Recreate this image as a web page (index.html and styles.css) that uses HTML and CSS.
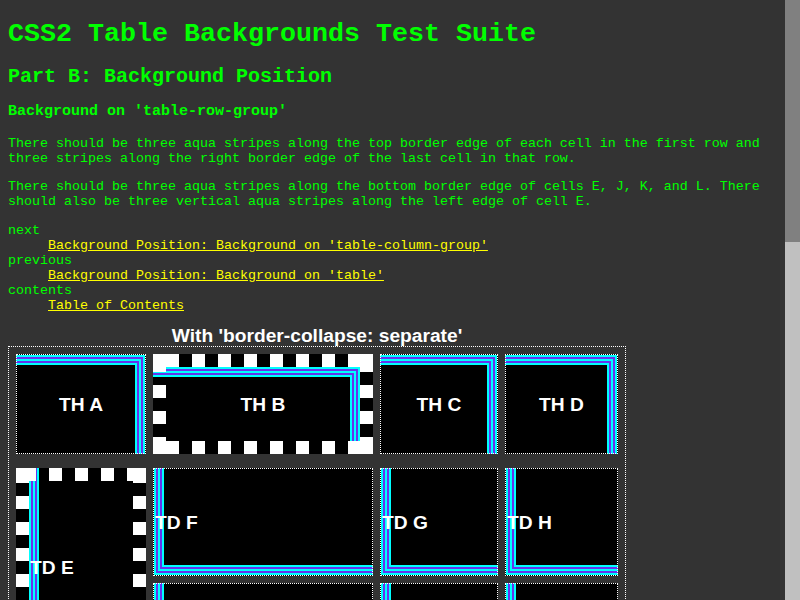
FILE: index.html
```html
<!DOCTYPE html>
<html lang="en">
<head>
<meta charset="utf-8">
<title>CSS2 Table Backgrounds Test Suite</title>
<link rel="stylesheet" href="styles.css">
</head>
<body>
<h1>CSS2 Table Backgrounds Test Suite</h1>
<h2>Part B: Background Position</h2>
<h3>Background on 'table-row-group'</h3>
<p>There should be three aqua stripes along the top border edge of each cell in the first row and three stripes along the right border edge of the last cell in that row.</p>
<p>There should be three aqua stripes along the bottom border edge of cells E, J, K, and L. There should also be three vertical aqua stripes along the left edge of cell E.</p>
<dl class="nav">
  <dt>next</dt>
  <dd><a href="#">Background Position: Background on 'table-column-group'</a></dd>
  <dt>previous</dt>
  <dd><a href="#">Background Position: Background on 'table'</a></dd>
  <dt>contents</dt>
  <dd><a href="#">Table of Contents</a></dd>
</dl>
<div class="test">
  <div class="caption">With 'border-collapse: separate'</div>
  <div class="grid">
    <div class="cell head dot top-right">TH A</div>
    <div class="cell head check-b">TH B</div>
    <div class="cell head dot top-right">TH C</div>
    <div class="cell head dot top-right">TH D</div>
    <div class="cell body check-e">TD E</div>
    <div class="cell body dot bottom-left">TD F</div>
    <div class="cell body dot bottom-left">TD G</div>
    <div class="cell body dot bottom-left">TD H</div>
    <div class="cell body dot bottom-left"></div>
    <div class="cell body dot bottom-left"></div>
    <div class="cell body dot bottom-left"></div>
  </div>
</div>
<div class="scrollbar"><div class="thumb"></div></div>
</body>
</html>
```
FILE: styles.css
```css
html {
  background: #333333;
  overflow: hidden;
}
body {
  margin: 8px 23px 8px 8px;
  font-family: "Liberation Mono", "Courier New", monospace;
  font-size: 13.333px;
  line-height: 15px;
  color: #00ff00;
}
h1 {
  font-size: 26.667px;
  line-height: 30px;
  font-weight: bold;
  margin: 11px 0 16px;
}
h2 {
  font-size: 20px;
  line-height: 23px;
  font-weight: bold;
  margin: 16px 0 15px;
}
h3 {
  font-size: 15px;
  line-height: 17px;
  font-weight: bold;
  margin: 15px 0 16px;
}
p {
  margin: 13.333px 0;
}
.nav {
  margin: 13.333px 0;
}
.nav dd {
  margin-left: 40px;
}
.nav a {
  color: #ffff00;
  text-decoration: underline;
}
.test {
  width: 618px;
}
.caption {
  font-family: "Liberation Sans", Arial, sans-serif;
  font-weight: bold;
  font-size: 19.2px;
  line-height: 20px;
  color: #ffffff;
  text-align: center;
}
.grid {
  border: 1px dotted #ffffff;
  padding: 7px;
  display: grid;
  grid-template-columns: 130px 220px 118px 113px;
  grid-template-rows: auto 108px 84px;
  gap: 7px;
}
.cell {
  --aq: #00ffff;
  --pu: #6633ee;
  box-sizing: border-box;
  display: flex;
  align-items: center;
  padding: 2px 1px 0 1px;
  font-family: "Liberation Sans", Arial, sans-serif;
  font-weight: bold;
  font-size: 19.2px;
  line-height: 22px;
  color: #ffffff;
  background-color: #000000;
  background-repeat: no-repeat;
  background-origin: border-box;
}
.head {
  height: 100px;
  margin-bottom: 7px;
  justify-content: center;
}
.body {
  justify-content: flex-start;
}
.dot {
  --b: 1px;
  border: 1px dotted #ffffff;
}
.top-right {
  background-image:
    linear-gradient(#000, #000),
    linear-gradient(var(--aq), var(--aq)),
    linear-gradient(var(--pu), var(--pu)),
    linear-gradient(var(--aq), var(--aq)),
    linear-gradient(var(--pu), var(--pu)),
    linear-gradient(var(--aq), var(--aq));
  background-size:
    calc(100% - var(--b) - 10px) calc(100% - var(--b) - 10px),
    calc(100% - var(--b) - 8px) calc(100% - var(--b) - 8px),
    calc(100% - var(--b) - 6px) calc(100% - var(--b) - 6px),
    calc(100% - var(--b) - 4px) calc(100% - var(--b) - 4px),
    calc(100% - var(--b) - 2px) calc(100% - var(--b) - 2px),
    calc(100% - var(--b)) calc(100% - var(--b));
  background-position: left bottom;
}
.bottom-left {
  background-image:
    linear-gradient(#000, #000),
    linear-gradient(var(--aq), var(--aq)),
    linear-gradient(var(--pu), var(--pu)),
    linear-gradient(var(--aq), var(--aq)),
    linear-gradient(var(--pu), var(--pu)),
    linear-gradient(var(--aq), var(--aq));
  background-size:
    calc(100% - var(--b) - 10px) calc(100% - var(--b) - 10px),
    calc(100% - var(--b) - 8px) calc(100% - var(--b) - 8px),
    calc(100% - var(--b) - 6px) calc(100% - var(--b) - 6px),
    calc(100% - var(--b) - 4px) calc(100% - var(--b) - 4px),
    calc(100% - var(--b) - 2px) calc(100% - var(--b) - 2px),
    calc(100% - var(--b)) calc(100% - var(--b));
  background-position: right top;
}
.check-b {
  --b: 13px;
  border: 13px solid transparent;
  background-image:
    linear-gradient(#fff, #fff),
    linear-gradient(#fff, #fff),
    linear-gradient(#fff, #fff),
    linear-gradient(#fff, #fff),
    repeating-linear-gradient(to right, transparent 0 13px, #fff 13px 26px),
    repeating-linear-gradient(to right, transparent 0 13px, #fff 13px 26px),
    repeating-linear-gradient(to bottom, transparent 0 5px, #fff 5px 18px, transparent 18px 26px),
    repeating-linear-gradient(to bottom, transparent 0 5px, #fff 5px 18px, transparent 18px 26px),
    linear-gradient(#000, #000),
    linear-gradient(var(--aq), var(--aq)),
    linear-gradient(var(--pu), var(--pu)),
    linear-gradient(var(--aq), var(--aq)),
    linear-gradient(var(--pu), var(--pu)),
    linear-gradient(var(--aq), var(--aq));
  background-size:
    13px 13px, 13px 13px, 13px 13px, 13px 13px,
    100% 13px, 100% 13px, 13px 100%, 13px 100%,
    calc(100% - 23px) calc(100% - 23px),
    calc(100% - 21px) calc(100% - 21px),
    calc(100% - 19px) calc(100% - 19px),
    calc(100% - 17px) calc(100% - 17px),
    calc(100% - 15px) calc(100% - 15px),
    calc(100% - 13px) calc(100% - 13px);
  background-position:
    left top, right top, left bottom, right bottom,
    left top, left bottom, left top, right top,
    left bottom, left bottom, left bottom, left bottom, left bottom, left bottom;
}
.check-e {
  --b: 13px;
  grid-row: span 2;
  border: 13px solid transparent;
  background-image:
    linear-gradient(#fff, #fff),
    linear-gradient(#fff, #fff),
    linear-gradient(#fff, #fff),
    linear-gradient(#fff, #fff),
    repeating-linear-gradient(to right, transparent 0 7px, #fff 7px 20px, transparent 20px 26px),
    repeating-linear-gradient(to right, transparent 0 7px, #fff 7px 20px, transparent 20px 26px),
    repeating-linear-gradient(to bottom, transparent 0 2px, #fff 2px 15px, transparent 15px 26px),
    repeating-linear-gradient(to bottom, transparent 0 2px, #fff 2px 15px, transparent 15px 26px),
    linear-gradient(#000, #000),
    linear-gradient(var(--aq), var(--aq)),
    linear-gradient(var(--pu), var(--pu)),
    linear-gradient(var(--aq), var(--aq)),
    linear-gradient(var(--pu), var(--pu)),
    linear-gradient(var(--aq), var(--aq));
  background-size:
    13px 13px, 13px 13px, 13px 13px, 13px 13px,
    100% 13px, 100% 13px, 13px 100%, 13px 100%,
    calc(100% - 23px) calc(100% - 23px),
    calc(100% - 21px) calc(100% - 21px),
    calc(100% - 19px) calc(100% - 19px),
    calc(100% - 17px) calc(100% - 17px),
    calc(100% - 15px) calc(100% - 15px),
    calc(100% - 13px) calc(100% - 13px);
  background-position:
    left top, right top, left bottom, right bottom,
    left top, left bottom, left top, right top,
    right top, right top, right top, right top, right top, right top;
}
.scrollbar {
  position: fixed;
  top: 0;
  right: 0;
  width: 15px;
  height: 600px;
  background: #c0c0c0;
}
.thumb {
  height: 242px;
  background: #808080;
}
```
